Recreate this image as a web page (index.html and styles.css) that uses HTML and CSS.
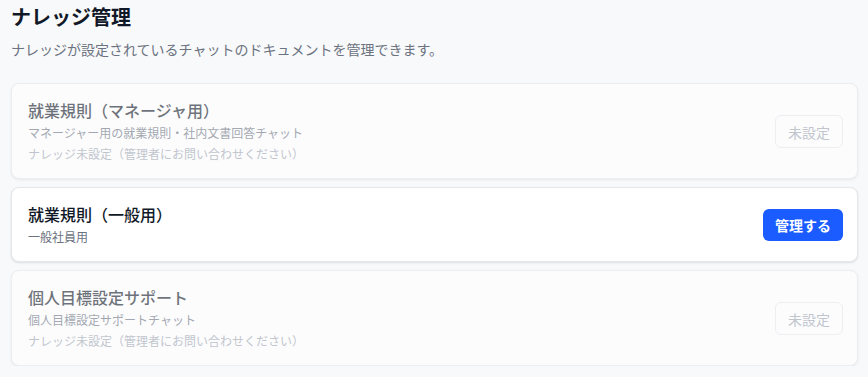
FILE: index.html
```html
<!DOCTYPE html>
<html lang="ja">
<head>
<meta charset="utf-8">
<link rel="stylesheet" href="styles.css">
</head>
<body>
<main class="page">
  <h1 class="title">ナレッジ管理</h1>
  <p class="lead">ナレッジが設定されているチャットのドキュメントを管理できます。</p>
  <div class="list">
    <div class="card disabled">
      <div class="info">
        <div class="name">就業規則（マネージャ用）</div>
        <div class="desc">マネージャー用の就業規則・社内文書回答チャット</div>
        <div class="note">ナレッジ未設定（管理者にお問い合わせください）</div>
      </div>
      <button class="btn ghost" disabled>未設定</button>
    </div>
    <div class="card">
      <div class="info">
        <div class="name">就業規則（一般用）</div>
        <div class="desc">一般社員用</div>
      </div>
      <button class="btn primary">管理する</button>
    </div>
    <div class="card disabled">
      <div class="info">
        <div class="name">個人目標設定サポート</div>
        <div class="desc">個人目標設定サポートチャット</div>
        <div class="note">ナレッジ未設定（管理者にお問い合わせください）</div>
      </div>
      <button class="btn ghost" disabled>未設定</button>
    </div>
  </div>
</main>
</body>
</html>
```
FILE: styles.css
```css
* { box-sizing: border-box; }
html, body {
  margin: 0;
  padding: 0;
  background: #f8f9fb;
  font-family: "Noto Sans CJK JP", "Noto Sans", sans-serif;
  color: #111827;
}
.page {
  padding: 3px 10px 0 11px;
}
.title {
  margin: 0;
  font-size: 20px;
  line-height: 28px;
  font-weight: 700;
  color: #111827;
}
.lead {
  margin: 8px 0 0 0;
  font-size: 14px;
  line-height: 20px;
  color: #6b7280;
}
.list {
  margin-top: 24px;
  display: flex;
  flex-direction: column;
  gap: 8px;
}
.card {
  display: flex;
  align-items: center;
  justify-content: space-between;
  background: #ffffff;
  border: 1px solid #e5e7eb;
  border-radius: 8px;
  box-shadow: 0 1px 3px rgba(0,0,0,0.08), 0 1px 2px rgba(0,0,0,0.04);
  padding: 16px 14px 16px 16px;
}
.card.disabled {
  opacity: 0.6;
}
.info {
  display: flex;
  flex-direction: column;
}
.name {
  font-size: 16px;
  line-height: 20px;
  font-weight: 500;
  color: #111827;
}
.desc {
  margin-top: 5px;
  font-size: 12px;
  line-height: 16px;
  color: #6b7280;
}
.note {
  margin-top: 5px;
  font-size: 12px;
  line-height: 16px;
  color: #9ca3af;
}
.btn {
  font-family: inherit;
  font-size: 14px;
  line-height: 20px;
  border-radius: 6px;
  cursor: pointer;
}
.btn.ghost {
  padding: 6px 12px;
  height: 33px;
  background: #ffffff;
  border: 1px solid #e5e7eb;
  color: #9ca3af;
}
.btn.primary {
  padding: 6px 12px;
  height: 32px;
  background: #1a5cff;
  border: none;
  color: #ffffff;
  font-weight: 700;
}
```
